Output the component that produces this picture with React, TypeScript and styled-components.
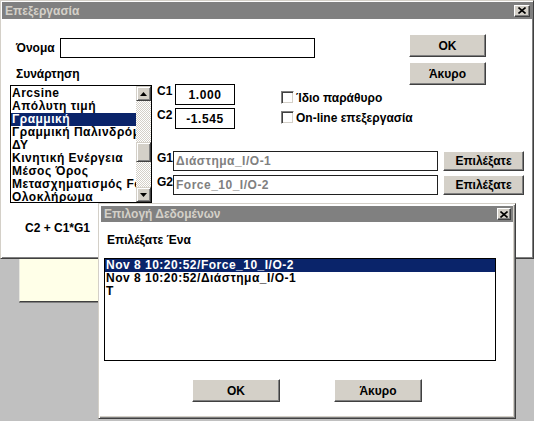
import styled, { createGlobalStyle } from "styled-components";

const GlobalStyle = createGlobalStyle`
  html, body {
    margin: 0;
    padding: 0;
  }
  body {
    background: #c0c0c0;
    font-family: "Liberation Sans", Arial, sans-serif;
    font-size: 12px;
    font-weight: 700;
    color: #000;
  }
  * {
    box-sizing: border-box;
  }
`;

const functions = [
  "Arcsine",
  "Απόλυτη τιμή",
  "Γραμμική",
  "Γραμμική Παλινδρόμηση",
  "ΔΥ",
  "Κινητική Ενέργεια",
  "Μέσος Όρος",
  "Μετασχηματισμός Fourier",
  "Ολοκλήρωμα",
];

const dataItems = [
  "Nov 8 10:20:52/Force_10_I/O-2",
  "Nov 8 10:20:52/Διάστημα_I/O-1",
  "T",
];

function CloseIcon() {
  return (
    <svg width="8" height="7" viewBox="0 0 8 7">
      <path d="M0.5 0.5 L7.5 6.5 M7.5 0.5 L0.5 6.5" stroke="#000" strokeWidth="1.6" />
    </svg>
  );
}

function Arrow({ dir }: { dir: "up" | "down" }) {
  return (
    <svg width="7" height="4" viewBox="0 0 7 4">
      <path d={dir === "up" ? "M3.5 0 L7 4 L0 4 Z" : "M0 0 L7 0 L3.5 4 Z"} fill="#000" />
    </svg>
  );
}

export default function App() {
  return (
    <>
      <GlobalStyle />
      <Desktop>
        <Window>
          <TitleBar $height={17}>
            <span>Επεξεργασία</span>
            <CloseButton $width={16}>
              <CloseIcon />
            </CloseButton>
          </TitleBar>

          <MainBody>
            <Header>
              <HeaderLeft>
                <NameRow>
                  <span>Όνομα</span>
                  <TextBox $width={255} />
                </NameRow>
                <SectionLabel>Συνάρτηση</SectionLabel>
              </HeaderLeft>
              <ButtonStack>
                <Button $width={77} $height={23}>OK</Button>
                <Button $width={77} $height={23}>Άκυρο</Button>
              </ButtonStack>
            </Header>

            <Middle>
              <FuncList>
                <Items>
                  {functions.map((f) => (
                    <Item key={f} $selected={f === "Γραμμική"}>
                      {f}
                    </Item>
                  ))}
                </Items>
                <ScrollBar>
                  <ScrollArrow>
                    <Arrow dir="up" />
                  </ScrollArrow>
                  <Track>
                    <Thumb />
                  </Track>
                  <ScrollArrow>
                    <Arrow dir="down" />
                  </ScrollArrow>
                </ScrollBar>
              </FuncList>

              <RightSide>
                <CBlock>
                  <CFields>
                    <FieldRow>
                      <FieldLabel $width={18}>C1</FieldLabel>
                      <ValueBox>1.000</ValueBox>
                    </FieldRow>
                    <FieldRow>
                      <FieldLabel $width={18}>C2</FieldLabel>
                      <ValueBox>-1.545</ValueBox>
                    </FieldRow>
                  </CFields>
                  <Checks>
                    <CheckRow>
                      <CheckBox />
                      <span>Ίδιο παράθυρο</span>
                    </CheckRow>
                    <CheckRow>
                      <CheckBox />
                      <span>On-line επεξεργασία</span>
                    </CheckRow>
                  </Checks>
                </CBlock>

                <GRows>
                  <FieldRow>
                    <FieldLabel $width={16}>G1</FieldLabel>
                    <SourceBox>Διάστημα_I/O-1</SourceBox>
                    <Button $width={81} $height={20}>Επιλέξατε</Button>
                  </FieldRow>
                  <FieldRow>
                    <FieldLabel $width={16}>G2</FieldLabel>
                    <SourceBox>Force_10_I/O-2</SourceBox>
                    <Button $width={81} $height={20}>Επιλέξατε</Button>
                  </FieldRow>
                </GRows>
              </RightSide>
            </Middle>

            <Formula>C2 + C1*G1</Formula>
          </MainBody>
        </Window>

        <Note />

        <Dialog>
          <TitleBar $height={16}>
            <span>Επιλογή Δεδομένων</span>
            <CloseButton $width={14}>
              <CloseIcon />
            </CloseButton>
          </TitleBar>
          <DialogBody>
            <Prompt>Επιλέξατε Ένα</Prompt>
            <DataList>
              {dataItems.map((d, i) => (
                <Item key={d} $selected={i === 0}>
                  {d}
                </Item>
              ))}
            </DataList>
            <DialogButtons>
              <Button $width={88} $height={23}>OK</Button>
              <Button $width={88} $height={23}>Άκυρο</Button>
            </DialogButtons>
          </DialogBody>
        </Dialog>
      </Desktop>
    </>
  );
}

const Desktop = styled.div`
  position: relative;
  width: 534px;
  height: 421px;
  overflow: hidden;
  background: #c0c0c0;
`;

const Window = styled.div`
  width: 534px;
  height: 259px;
  display: flex;
  flex-direction: column;
  padding: 1px;
  background: #fff;
  border: 1px solid;
  border-color: #d4d0c8 #404040 #404040 #d4d0c8;
  box-shadow: inset 1px 1px #fff, inset -1px -1px #808080;
`;

const TitleBar = styled.div<{ $height: number }>`
  height: ${({ $height }) => $height}px;
  flex-shrink: 0;
  display: flex;
  align-items: center;
  justify-content: space-between;
  padding: 0 2px 0 3px;
  background: #808080;
  color: #d4d0c8;
  font-size: 12px;
`;

const CloseButton = styled.div<{ $width: number }>`
  width: ${({ $width }) => $width}px;
  height: 12px;
  display: flex;
  align-items: center;
  justify-content: center;
  background: #d4d0c8;
  border: 1px solid;
  border-color: #fff #404040 #404040 #fff;
  box-shadow: inset -1px -1px #808080;
`;

const MainBody = styled.div`
  flex: 1;
  display: flex;
  flex-direction: column;
`;

const Header = styled.div`
  height: 66px;
  display: flex;
  justify-content: space-between;
`;

const HeaderLeft = styled.div`
  display: flex;
  flex-direction: column;
  padding: 19px 0 0 14px;
`;

const NameRow = styled.div`
  display: flex;
  align-items: center;
  gap: 5px;
`;

const TextBox = styled.div<{ $width: number }>`
  width: ${({ $width }) => $width}px;
  height: 20px;
  border: 1px solid #000;
  background: #fff;
`;

const SectionLabel = styled.div`
  margin-top: 9px;
  line-height: 15px;
`;

const ButtonStack = styled.div`
  display: flex;
  flex-direction: column;
  gap: 5px;
  padding-top: 15px;
  margin-right: 46px;
`;

const Button = styled.div<{ $width: number; $height: number }>`
  width: ${({ $width }) => $width}px;
  height: ${({ $height }) => $height}px;
  flex-shrink: 0;
  display: flex;
  align-items: center;
  justify-content: center;
  background: #d4d0c8;
  border: 1px solid;
  border-color: #fff #404040 #404040 #fff;
  box-shadow: inset -1px -1px #808080;
`;

const Middle = styled.div`
  display: flex;
  align-items: flex-start;
  padding-left: 8px;
`;

const FuncList = styled.div`
  width: 142px;
  height: 118px;
  flex-shrink: 0;
  display: flex;
  border: 1px solid #000;
  background: #fff;
`;

const Items = styled.div`
  flex: 1;
  min-width: 0;
  overflow: hidden;
  padding-top: 1px;
`;

const Item = styled.div<{ $selected?: boolean }>`
  height: 13px;
  line-height: 13px;
  letter-spacing: 0.5px;
  padding-left: 1px;
  white-space: nowrap;
  overflow: hidden;
  background: ${({ $selected }) => ($selected ? "#0a246a" : "transparent")};
  color: ${({ $selected }) => ($selected ? "#fff" : "#000")};
`;

const ScrollBar = styled.div`
  width: 15px;
  flex-shrink: 0;
  display: flex;
  flex-direction: column;
`;

const ScrollArrow = styled.div`
  width: 15px;
  height: 15px;
  flex-shrink: 0;
  display: flex;
  align-items: center;
  justify-content: center;
  background: #d4d0c8;
  border: 1px solid;
  border-color: #d4d0c8 #404040 #404040 #d4d0c8;
  box-shadow: inset 1px 1px #fff, inset -1px -1px #808080;
`;

const Track = styled.div`
  flex: 1;
  background: repeating-conic-gradient(#d4d0c8 0 25%, #fff 0 50%) 0 0 / 2px 2px;
  padding-top: 41px;
`;

const Thumb = styled.div`
  width: 15px;
  height: 20px;
  background: #d4d0c8;
  border: 1px solid;
  border-color: #d4d0c8 #404040 #404040 #d4d0c8;
  box-shadow: inset 1px 1px #fff, inset -1px -1px #808080;
`;

const RightSide = styled.div`
  display: flex;
  flex-direction: column;
  margin-left: 5px;
`;

const CBlock = styled.div`
  display: flex;
  margin-top: -1px;
`;

const CFields = styled.div`
  display: flex;
  flex-direction: column;
  gap: 3px;
`;

const FieldRow = styled.div`
  display: flex;
  align-items: flex-start;
`;

const FieldLabel = styled.div<{ $width: number }>`
  width: ${({ $width }) => $width}px;
  line-height: 14px;
`;

const ValueBox = styled.div`
  width: 60px;
  height: 21px;
  border: 1px solid #000;
  display: flex;
  align-items: center;
  justify-content: center;
  letter-spacing: 0.6px;
`;

const Checks = styled.div`
  display: flex;
  flex-direction: column;
  gap: 7px;
  padding-top: 7px;
  margin-left: 46px;
`;

const CheckRow = styled.div`
  display: flex;
  align-items: center;
  gap: 2px;
  height: 13px;
`;

const CheckBox = styled.div`
  width: 13px;
  height: 13px;
  background: #fff;
  border: 1px solid;
  border-color: #808080 #fff #fff #808080;
  box-shadow: inset 1px 1px #404040, inset -1px -1px #d4d0c8;
`;

const GRows = styled.div`
  display: flex;
  flex-direction: column;
  gap: 4px;
  margin-top: 22px;
`;

const SourceBox = styled.div`
  width: 265px;
  height: 20px;
  margin-right: 5px;
  padding-left: 2px;
  display: flex;
  align-items: center;
  border: 1px solid #202020;
  color: #808080;
  letter-spacing: 0.5px;
  white-space: nowrap;
`;

const Formula = styled.div`
  margin-top: 18px;
  padding-left: 23px;
  line-height: 15px;
`;

const Note = styled.div`
  width: 100px;
  height: 43px;
  margin-left: 19px;
  background: #ffffe8;
  border-left: 1px solid #e8e8e0;
  border-bottom: 1px solid #404040;
  box-shadow: 0 1px #808080;
`;

const Dialog = styled.div`
  position: absolute;
  left: 98px;
  top: 203px;
  width: 418px;
  height: 216px;
  display: flex;
  flex-direction: column;
  padding: 2px;
  background: #fff;
  border: 1px solid;
  border-color: #d4d0c8 #404040 #404040 #d4d0c8;
  box-shadow: inset 1px 1px #fff, inset -1px -1px #808080, inset -2px -2px #d4d0c8;
`;

const DialogBody = styled.div`
  flex: 1;
  display: flex;
  flex-direction: column;
`;

const Prompt = styled.div`
  margin-top: 11px;
  padding-left: 6px;
  line-height: 14px;
`;

const DataList = styled.div`
  width: 392px;
  height: 103px;
  margin: 11px 0 0 3px;
  border: 1px solid #000;
  overflow: hidden;
`;

const DialogButtons = styled.div`
  display: flex;
  justify-content: center;
  gap: 54px;
  margin-top: 18px;
`;
